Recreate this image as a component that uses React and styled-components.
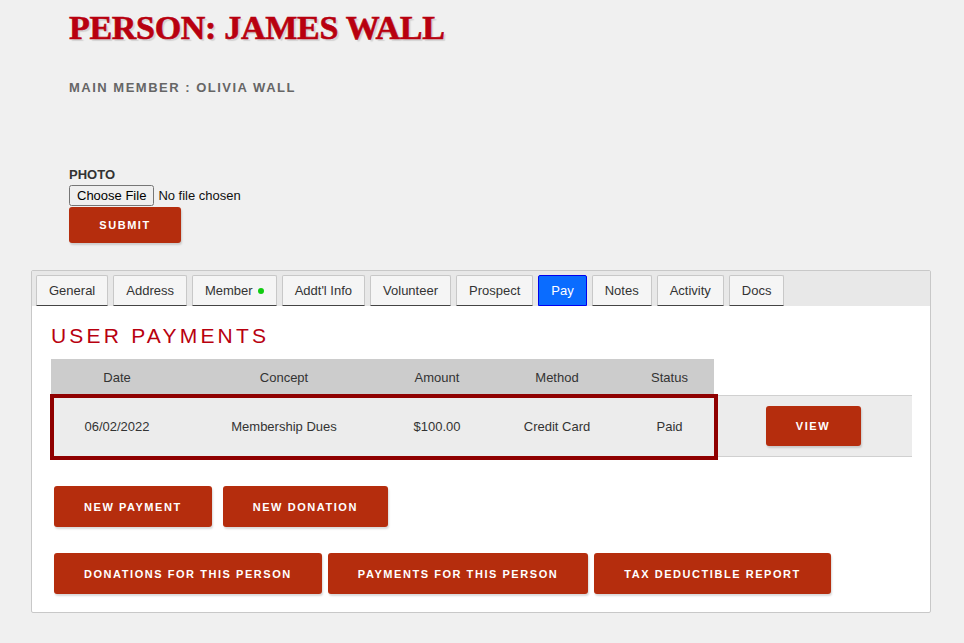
import React from "react";
import styled, { createGlobalStyle } from "styled-components";

const GlobalStyle = createGlobalStyle`
  html, body {
    margin: 0;
    background: #f0f0f0;
    font-family: "Liberation Sans", Arial, sans-serif;
  }
`;

const tabs = [
  "General",
  "Address",
  "Member",
  "Addt'l Info",
  "Volunteer",
  "Prospect",
  "Pay",
  "Notes",
  "Activity",
  "Docs",
];

const columns = [
  { label: "Date", width: 132 },
  { label: "Concept", width: 202 },
  { label: "Amount", width: 104 },
  { label: "Method", width: 136 },
  { label: "Status", width: 89 },
];

const payments = [
  {
    date: "06/02/2022",
    concept: "Membership Dues",
    amount: "$100.00",
    method: "Credit Card",
    status: "Paid",
  },
];

const App = () => {
  return (
    <>
      <GlobalStyle />
      <Page>
        <Header>
          <Title>PERSON: JAMES WALL</Title>
          <SubTitle>MAIN MEMBER : OLIVIA WALL</SubTitle>
        </Header>

        <PhotoForm onSubmit={(e) => e.preventDefault()}>
          <Label>PHOTO</Label>
          <FileInput type="file" />
          <Button type="submit" $small>
            SUBMIT
          </Button>
        </PhotoForm>

        <Panel>
          <TabBar>
            {tabs.map((tab) => (
              <Tab key={tab} $active={tab === "Pay"}>
                {tab}
                {tab === "Member" && <Dot />}
              </Tab>
            ))}
          </TabBar>

          <Content>
            <SectionTitle>USER PAYMENTS</SectionTitle>
            <Table>
              <thead>
                <tr>
                  {columns.map((c) => (
                    <Th key={c.label} style={{ width: c.width }}>
                      {c.label}
                    </Th>
                  ))}
                  <Blank />
                </tr>
              </thead>
              <tbody>
                {payments.map((p) => (
                  <Row key={p.date}>
                    <Td>
                      <Highlight />
                      {p.date}
                    </Td>
                    <Td>{p.concept}</Td>
                    <Td>{p.amount}</Td>
                    <Td>{p.method}</Td>
                    <Td>{p.status}</Td>
                    <Td>
                      <Button $view>VIEW</Button>
                    </Td>
                  </Row>
                ))}
              </tbody>
            </Table>

            <ButtonRow $top={29}>
              <Button>NEW PAYMENT</Button>
              <Button>NEW DONATION</Button>
            </ButtonRow>
            <ButtonRow $top={26} $gap={6}>
              <Button>DONATIONS FOR THIS PERSON</Button>
              <Button>PAYMENTS FOR THIS PERSON</Button>
              <Button>TAX DEDUCTIBLE REPORT</Button>
            </ButtonRow>
          </Content>
        </Panel>
      </Page>
    </>
  );
};

export default App;

const Page = styled.div`
  padding: 0 33px 30px 31px;
`;

const Header = styled.div`
  padding: 8px 0 0 38px;
`;

const Title = styled.h1`
  margin: 0;
  font-family: "Liberation Serif", "Times New Roman", serif;
  font-weight: bold;
  font-size: 34px;
  line-height: 40px;
  color: #b8000f;
  letter-spacing: -0.3px;
  -webkit-text-stroke: 0.6px #b8000f;
  text-shadow: 2px 2px 1px #d2d2d2;
`;

const SubTitle = styled.div`
  margin-top: 32px;
  font-size: 13px;
  font-weight: bold;
  letter-spacing: 1.5px;
  color: #666;
`;

const PhotoForm = styled.form`
  display: flex;
  flex-direction: column;
  align-items: flex-start;
  padding: 72px 0 0 38px;
`;

const Label = styled.div`
  font-size: 13px;
  font-weight: bold;
  color: #333;
  margin-bottom: 3px;
`;

const FileInput = styled.input`
  font-family: "Liberation Sans", Arial, sans-serif;
  font-size: 13px;
  margin: 0 0 1px 0;
  color: #111;
`;

const Button = styled.button`
  display: inline-block;
  height: ${(p) => (p.$small ? "36px" : "41px")};
  padding: 0 30px;
  min-width: ${(p) => (p.$small ? "112px" : p.$view ? "95px" : "0")};
  border: none;
  border-radius: 3px;
  background: #b52d0d;
  color: #fff;
  font-family: "Liberation Sans", Arial, sans-serif;
  font-size: 11px;
  font-weight: bold;
  letter-spacing: 1.55px;
  box-shadow: 1px 2px 2px rgba(0, 0, 0, 0.15);
  cursor: pointer;
  ${(p) => p.$view && "height: 40px;"}
`;

const Panel = styled.div`
  margin-top: 27px;
  border: 1px solid #c8c8c8;
  border-radius: 2px;
  background: #fff;
`;

const TabBar = styled.div`
  display: flex;
  gap: 5px;
  padding: 4px 0 0 4px;
  background: #e8e8e8;
`;

const Tab = styled.div`
  display: flex;
  align-items: center;
  height: 29px;
  padding: 0 12px;
  border: 1px solid ${(p) => (p.$active ? "#0000ee" : "#c8c8c8")};
  border-bottom: 1px solid ${(p) => (p.$active ? "#0000ee" : "#444")};
  border-radius: 2px 2px 0 0;
  background: ${(p) => (p.$active ? "#0a6cff" : "#f5f5f5")};
  color: ${(p) => (p.$active ? "#fff" : "#333")};
  font-size: 13px;
`;

const Dot = styled.span`
  width: 6px;
  height: 6px;
  margin-left: 5px;
  border-radius: 50%;
  background: #11cc11;
`;

const Content = styled.div`
  padding: 16px 18px 18px 19px;
`;

const SectionTitle = styled.h2`
  margin: 0 0 9px 0;
  font-weight: normal;
  font-size: 21px;
  line-height: 28px;
  letter-spacing: 3.2px;
  color: #b8000f;
`;

const Table = styled.table`
  border-collapse: collapse;
  width: 861px;
  font-size: 13px;
  color: #333;
`;

const Th = styled.th`
  height: 36px;
  padding: 0;
  background: #cccccc;
  font-weight: normal;
  text-align: center;
`;

const Blank = styled.th`
  background: #fff;
`;

const Row = styled.tr`
  background: #ececec;
  border-top: 1px solid #d0d0d0;
  border-bottom: 1px solid #d0d0d0;
`;

const Td = styled.td`
  position: relative;
  height: 60px;
  padding: 0;
  text-align: center;
`;

// outline drawn over the five data cells of the row
const Highlight = styled.span`
  position: absolute;
  left: -1px;
  top: -2px;
  width: 668px;
  height: 66px;
  box-sizing: border-box;
  border: 4px solid #8f0000;
  pointer-events: none;
`;

const ButtonRow = styled.div`
  display: flex;
  gap: ${(p) => (p.$gap ? `${p.$gap}px` : "11px")};
  margin-top: ${(p) => p.$top}px;
  padding-left: 3px;
`;
